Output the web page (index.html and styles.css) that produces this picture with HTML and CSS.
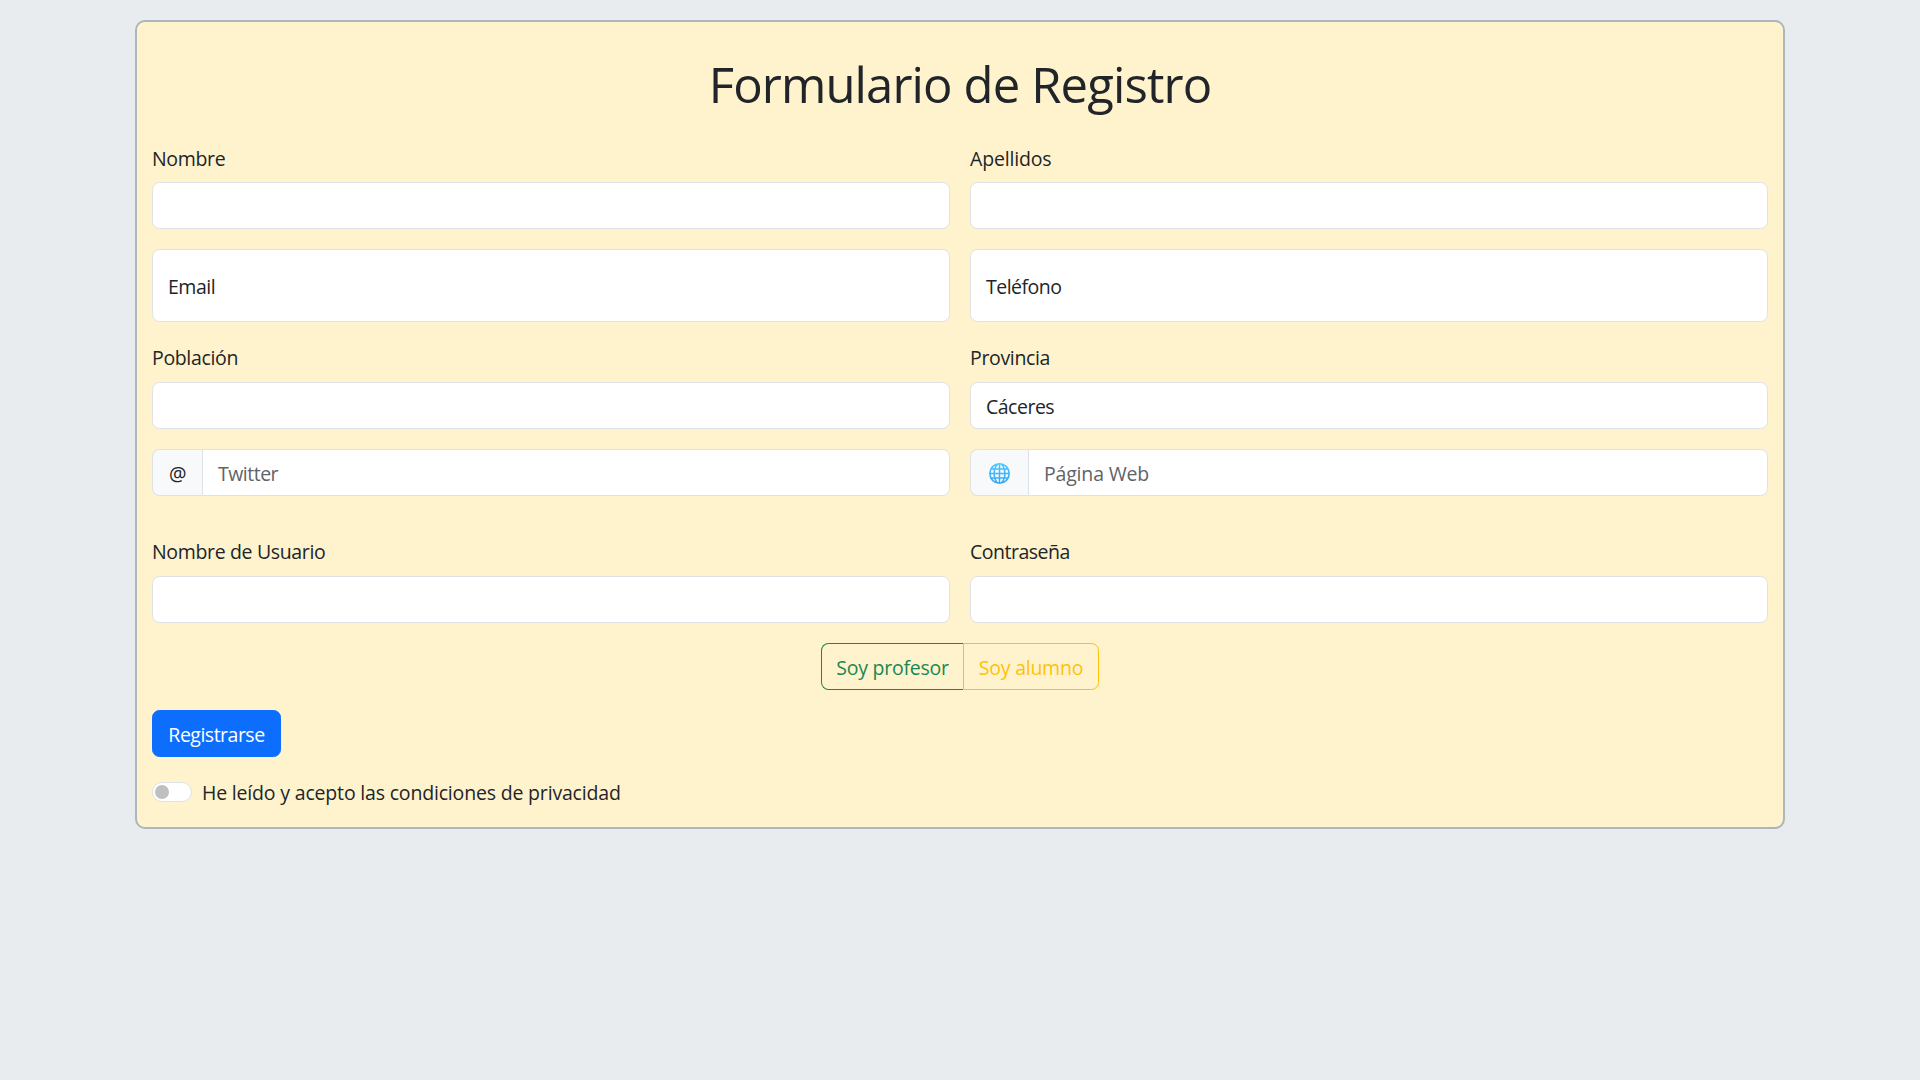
FILE: index.html
```html
<!DOCTYPE html>
<html lang="es">
<head>
<meta charset="utf-8">
<title>Formulario de Registro</title>
<link rel="stylesheet" href="styles.css">
</head>
<body>
<form class="card">
  <h1 class="title">Formulario de Registro</h1>
  <div class="row">
    <div class="field"><label class="label" for="nombre">Nombre</label><input class="control" id="nombre" type="text"></div>
    <div class="field"><label class="label wide" for="apellidos">Apellidos</label><input class="control" id="apellidos" type="text"></div>
  </div>
  <div class="row">
    <label class="control floating tight">Email</label>
    <label class="control floating tight">Teléfono</label>
  </div>
  <div class="row row-place">
    <div class="field"><label class="label" for="poblacion">Población</label><input class="control" id="poblacion" type="text"></div>
    <div class="field"><label class="label">Provincia</label><div class="control select tight">Cáceres</div></div>
  </div>
  <div class="row">
    <div class="group"><span class="addon addon-at">@</span><div class="control hint tight">Twitter</div></div>
    <div class="group">
      <span class="addon addon-web">
        <svg class="globe" viewBox="0 0 20 20">
          <defs><linearGradient id="sky" x1="0" y1="0" x2="0" y2="1"><stop offset="0" stop-color="#4fc8ff"/><stop offset="1" stop-color="#38a4f5"/></linearGradient></defs>
          <circle cx="10" cy="10" r="10" fill="url(#sky)"/>
          <path d="M6 6.5h3.3v2.8H5.7zM10.7 6.5H14l.3 2.8h-3.6zM5.7 10.7h3.6v2.8H6zM10.7 10.7h3.6l-.3 2.8h-3.3zM2.3 6.5h2.2l-.3 2.8H1.7zM15.5 6.5h2.2l.6 2.8h-2.5zM1.7 10.7h2.5l.3 2.8H2.3zM15.8 10.7h2.5l-.6 2.8h-2.2zM6.5 5c.7-2 1.7-3.2 2.8-3.5V5zM10.7 1.500c1.100.3 2.100 1.500 2.800 3.500h-2.800zM6.500 15h2.800v3.500c-1.100-.3-2.100-1.500-2.800-3.500zM10.700 15h2.800c-.7 2-1.700 3.200-2.800 3.500zM3.300 5q1-1.500 2.800-2.600L5 5zM16.700 5q-1-1.500-2.800-2.600L15 5zM3.300 15q1 1.500 2.800 2.600L5 15zM16.700 15q-1 1.500-2.800 2.600L15 15z" fill="#f0faff"/>
        </svg>
      </span>
      <div class="control hint wide">Página Web</div>
    </div>
  </div>
  <div class="row row-user">
    <div class="field"><label class="label" for="usuario">Nombre de Usuario</label><input class="control" id="usuario" type="text"></div>
    <div class="field"><label class="label tight" for="clave">Contraseña</label><input class="control" id="clave" type="password"></div>
  </div>
  <div class="choices"><button type="button" class="btn btn-teacher">Soy profesor</button><button type="button" class="btn btn-student">Soy alumno</button></div>
  <button type="button" class="btn btn-submit tight">Registrarse</button>
  <label class="terms wide"><span class="switch"></span><span class="terms-text">He leído y acepto las condiciones de privacidad</span></label>
</form>
</body>
</html>
```
FILE: styles.css
```css
* { box-sizing: border-box; }
body {
  margin: 0;
  padding-top: 20px;
  background: #e9ecef;
  color: #212529;
  font: 19.5px/30px "Open Sans", "Noto Sans", sans-serif;
  letter-spacing: -0.34px;
}
.card {
  display: flex;
  flex-direction: column;
  width: 1650px;
  height: 809px;
  margin: 0 auto;
  padding: 29px 15px 0;
  border: 2px solid #adb5bd;
  border-radius: 10px;
  background: #fff3cd;
}
.title {
  margin: 0 0 27px;
  font-size: 49px;
  font-weight: 400;
  line-height: 66px;
  letter-spacing: -0.87px;
  text-align: center;
}
.row {
  display: grid;
  grid-template-columns: 1fr 1fr;
  gap: 20px;
  margin-bottom: 20px;
}
.field { display: flex; flex-direction: column; }
.label { height: 38px; }
.control {
  width: 100%;
  height: 47px;
  padding: 0 15px;
  border: 1px solid #dee2e6;
  border-radius: 7.5px;
  background: #fff;
  color: #212529;
  font: inherit;
}
.floating { display: flex; align-items: center; height: 73px; padding-top: 2px; }
.row-place { margin-top: 1px; }
.row-place .label { height: 39px; }
.select, .hint { display: flex; align-items: center; padding-top: 2px; }
.group { display: flex; height: 47px; }
.hint { flex: 1; border-radius: 0 7.5px 7.5px 0; color: #5f6368; }
.addon {
  display: flex;
  align-items: center;
  justify-content: center;
  padding-top: 2px;
  border: 1px solid #dee2e6;
  border-right: 0;
  border-radius: 7.5px 0 0 7.5px;
  background: #f8f9fa;
}
.addon-at { width: 50px; }
.addon-web { width: 58px; }
.globe { width: 21px; height: 21px; }
.row-user { margin-top: 21px; }
.row-user .label { height: 39px; }
.choices { display: flex; justify-content: center; margin-bottom: 20px; }
.btn {
  height: 47px;
  padding: 2px 0 0;
  border: 1px solid;
  border-radius: 7.5px;
  background: transparent;
  font: inherit;
  letter-spacing: -0.24px;
}
.btn-teacher { width: 142px; border-right: 0; border-radius: 7.5px 0 0 7.5px; color: #198754; }
.btn-student { width: 136px; border-radius: 0 7.5px 7.5px 0; color: #ffc107; }
.btn-submit { width: 129px; border-color: #0d6efd; background: #0d6efd; color: #fff; }
.terms { display: flex; align-items: center; gap: 10px; margin-top: 19px; }
.terms-text { padding-top: 2px; }
.switch {
  display: flex;
  align-items: center;
  width: 40px;
  height: 20px;
  padding-left: 2px;
  border: 1px solid #dee2e6;
  border-radius: 10px;
  background: #fff;
}
.switch::before {
  content: "";
  width: 14px;
  height: 14px;
  border-radius: 50%;
  background: #bfbfbf;
}
.wide { letter-spacing: -0.18px; }
.tight { letter-spacing: -0.5px; }
```
